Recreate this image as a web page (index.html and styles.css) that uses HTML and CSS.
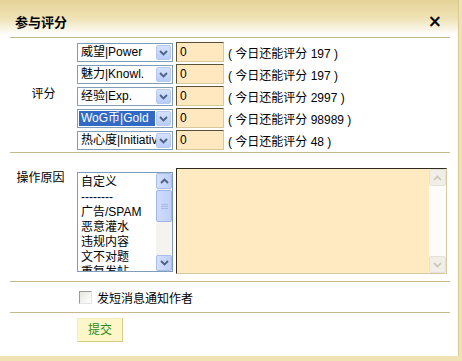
FILE: index.html
```html
<!DOCTYPE html>
<html lang="zh-CN">
<head>
  <meta charset="UTF-8">
  <title>参与评分</title>
  <link rel="stylesheet" href="styles.css">
</head>
<body>
  <div class="dialog">
    <!-- 标题 -->
    <div class="dialog-head">
      <span class="dialog-title">参与评分</span>
      <span class="dialog-close">×</span>
    </div>
    <div class="dialog-body">
      <!-- 评分 -->
      <div class="section rate-section">
        <div class="label label-mid">评分</div>
        <div class="rate-rows">
          <div class="rate-row">
            <div class="select"><span class="select-text">威望|Power</span><span class="select-btn"><svg width="9" height="6" viewBox="0 0 9 6"><path d="M1 1 L4.5 4.5 L8 1" fill="none" stroke="#4d6185" stroke-width="1.8"/></svg></span></div>
            <div class="score-input">0</div>
            <span class="rate-note">( 今日还能评分 197 )</span>
          </div>
          <div class="rate-row">
            <div class="select"><span class="select-text">魅力|Knowl.</span><span class="select-btn"><svg width="9" height="6" viewBox="0 0 9 6"><path d="M1 1 L4.5 4.5 L8 1" fill="none" stroke="#4d6185" stroke-width="1.8"/></svg></span></div>
            <div class="score-input">0</div>
            <span class="rate-note">( 今日还能评分 197 )</span>
          </div>
          <div class="rate-row">
            <div class="select"><span class="select-text">经验|Exp.</span><span class="select-btn"><svg width="9" height="6" viewBox="0 0 9 6"><path d="M1 1 L4.5 4.5 L8 1" fill="none" stroke="#4d6185" stroke-width="1.8"/></svg></span></div>
            <div class="score-input">0</div>
            <span class="rate-note">( 今日还能评分 2997 )</span>
          </div>
          <div class="rate-row">
            <div class="select focused"><span class="select-text">WoG币|Gold</span><span class="select-btn"><svg width="9" height="6" viewBox="0 0 9 6"><path d="M1 1 L4.5 4.5 L8 1" fill="none" stroke="#4d6185" stroke-width="1.8"/></svg></span></div>
            <div class="score-input">0</div>
            <span class="rate-note">( 今日还能评分 98989 )</span>
          </div>
          <div class="rate-row">
            <div class="select"><span class="select-text">热心度|Initiative</span><span class="select-btn"><svg width="9" height="6" viewBox="0 0 9 6"><path d="M1 1 L4.5 4.5 L8 1" fill="none" stroke="#4d6185" stroke-width="1.8"/></svg></span></div>
            <div class="score-input">0</div>
            <span class="rate-note">( 今日还能评分 48 )</span>
          </div>
        </div>
      </div>
      <!-- 操作原因 -->
      <div class="section reason-section">
        <div class="label label-top">操作原因</div>
        <div class="reason-fields">
          <div class="listbox">
            <ul class="list-items">
              <li>自定义</li>
              <li>--------</li>
              <li>广告/SPAM</li>
              <li>恶意灌水</li>
              <li>违规内容</li>
              <li>文不对题</li>
              <li>重复发帖</li>
            </ul>
            <div class="scrollbar">
              <span class="sb-btn"><svg width="9" height="6" viewBox="0 0 9 6"><path d="M1 5 L4.5 1.5 L8 5" fill="none" stroke="#4d6185" stroke-width="1.8"/></svg></span>
              <span class="sb-track">
                <span class="sb-thumb"><svg width="7" height="7" viewBox="0 0 7 7"><path d="M0 1.5 H7 M0 3.5 H7 M0 5.5 H7" stroke="#a6b9e8" stroke-width="1"/></svg></span>
              </span>
              <span class="sb-btn"><svg width="9" height="6" viewBox="0 0 9 6"><path d="M1 1 L4.5 4.5 L8 1" fill="none" stroke="#4d6185" stroke-width="1.8"/></svg></span>
            </div>
          </div>
          <div class="textarea">
            <div class="textarea-space"></div>
            <div class="scrollbar scrollbar-off">
              <span class="sb-btn"><svg width="9" height="6" viewBox="0 0 9 6"><path d="M1 5 L4.5 1.5 L8 5" fill="none" stroke="#c8c6b8" stroke-width="1.6"/></svg></span>
              <span class="sb-track"></span>
              <span class="sb-btn"><svg width="9" height="6" viewBox="0 0 9 6"><path d="M1 1 L4.5 4.5 L8 1" fill="none" stroke="#c8c6b8" stroke-width="1.6"/></svg></span>
            </div>
          </div>
        </div>
      </div>
      <!-- 通知 -->
      <div class="section notify-section">
        <div class="label"></div>
        <label class="check-row"><span class="checkbox"></span>发短消息通知作者</label>
      </div>
      <!-- 提交 -->
      <div class="section submit-section">
        <div class="label"></div>
        <div><span class="submit-btn">提交</span></div>
      </div>
    </div>
  </div>
</body>
</html>
```

FILE: styles.css
```css
body {
  margin: 0;
  background: #f1e2b3;
  font-family: "Liberation Sans", "Noto Sans CJK SC", sans-serif;
  font-size: 12px;
  color: #000;
}
.dialog {
  width: 459px;
  height: 356px;
  background: #fff;
  border-right: 1px solid #d9c993;
  box-sizing: border-box;
}
.dialog-head {
  height: 37px;
  display: flex;
  align-items: center;
  justify-content: space-between;
  padding: 5px 15px 0 15px;
  box-sizing: border-box;
  background: linear-gradient(#e6d399, #efe2b6 50%, #fff 95%);
}
.dialog-title {
  font-size: 13px;
  font-weight: bold;
}
.dialog-close {
  font-size: 17px;
  font-weight: bold;
  font-family: "DejaVu Sans", sans-serif;
  margin-right: 1px;
}
.dialog-body {
  margin: 0 8px 0 10px;
}
.section {
  display: grid;
  grid-template-columns: 67px 1fr;
  border-top: 1px solid #c7b98c;
}
.label {
  text-align: center;
}
.label-mid {
  align-self: center;
  margin-bottom: 8px;
}
.label-top {
  padding-top: 0;
  margin-left: -6px;
}
/* 评分 */
.rate-section {
  padding: 4px 0 2px 0;
}
.rate-rows {
  display: flex;
  flex-direction: column;
  gap: 2px;
}
.rate-row {
  display: flex;
  align-items: center;
  height: 20px;
}
.select {
  width: 96px;
  height: 19px;
  border: 1px solid #7f9db9;
  box-sizing: border-box;
  display: flex;
  align-items: center;
  padding: 1px;
  margin-top: 1px;
  background: #fff;
}
.select-text {
  flex: 1;
  overflow: hidden;
  white-space: nowrap;
  height: 15px;
  line-height: 15px;
  padding-left: 2px;
}
.select.focused .select-text {
  background: #316ac5;
  color: #fff;
  margin-right: 1px;
}
.select-btn {
  width: 15px;
  height: 15px;
  box-sizing: border-box;
  border: 1px solid #b7c9f3;
  border-radius: 2px;
  background: linear-gradient(#d5e1fd, #b9cdf8);
  display: flex;
  align-items: center;
  justify-content: center;
}
.score-input {
  width: 48px;
  height: 20px;
  margin-left: 3px;
  box-sizing: border-box;
  border-top: 1px solid #5c5035;
  border-left: 1px solid #5c5035;
  border-right: 1px solid #d9c89a;
  border-bottom: 1px solid #d9c89a;
  background: #ffe8c0;
  line-height: 18px;
  padding-left: 3px;
}
.rate-note {
  margin-left: 4px;
  white-space: nowrap;
}
/* 操作原因 */
.reason-section {
  padding: 15px 0 7px 0;
}
.reason-fields {
  display: flex;
  align-items: flex-start;
}
.listbox {
  width: 96px;
  height: 100px;
  margin-top: 4px;
  border: 1px solid #7f9db9;
  box-sizing: border-box;
  display: flex;
  overflow: hidden;
}
.list-items {
  flex: 1;
  margin: 0;
  padding: 2px 0 0 3px;
  list-style: none;
  font-size: 12px;
  line-height: 15px;
  white-space: nowrap;
  overflow: hidden;
}
.scrollbar {
  width: 16px;
  display: flex;
  flex-direction: column;
  background: #f4f3ee;
}
.sb-btn {
  height: 16px;
  box-sizing: border-box;
  border: 1px solid #a9bdec;
  border-radius: 2px;
  background: linear-gradient(90deg, #d3e0fd, #bccff8);
  display: flex;
  align-items: center;
  justify-content: center;
}
.sb-track {
  flex: 1;
  display: flex;
  flex-direction: column;
  padding-top: 1px;
}
.sb-thumb {
  height: 32px;
  box-sizing: border-box;
  border: 1px solid #9fb5ea;
  border-radius: 2px;
  background: linear-gradient(90deg, #cfdcfc, #bfd0f8);
  display: flex;
  align-items: center;
  justify-content: center;
}
.textarea {
  width: 271px;
  height: 106px;
  margin-left: 3px;
  box-sizing: border-box;
  border-top: 1px solid #2e2b1f;
  border-left: 1px solid #2e2b1f;
  border-right: 1px solid #d8c9a0;
  border-bottom: 1px solid #d8c9a0;
  background: #ffeac2;
  display: flex;
}
.textarea-space {
  flex: 1;
}
.scrollbar-off {
  width: 17px;
  background: #fdfcfa;
}
.scrollbar-off .sb-btn {
  height: 17px;
  border-color: #e4e2d8;
  background: #efeee7;
}
/* 通知 */
.notify-section {
  padding: 6px 0 6px 0;
}
.check-row {
  display: flex;
  align-items: center;
  gap: 5px;
  padding-left: 2px;
  height: 18px;
}
.checkbox {
  width: 13px;
  height: 13px;
  box-sizing: border-box;
  border-top: 1px solid #9a9a9a;
  border-left: 1px solid #9a9a9a;
  border-right: 1px solid #e4e4e4;
  border-bottom: 1px solid #e4e4e4;
  background: linear-gradient(135deg, #e6e6e0, #fff);
}
/* 提交 */
.submit-section {
  padding-top: 5px;
}
.submit-btn {
  display: inline-block;
  width: 46px;
  height: 24px;
  box-sizing: border-box;
  line-height: 22px;
  text-align: center;
  color: #2c8a16;
  background: #fdf6c8;
  border-top: 1px solid #f6eeb8;
  border-left: 1px solid #f6eeb8;
  border-right: 1px solid #d9c98a;
  border-bottom: 1px solid #d9c98a;
}
```
